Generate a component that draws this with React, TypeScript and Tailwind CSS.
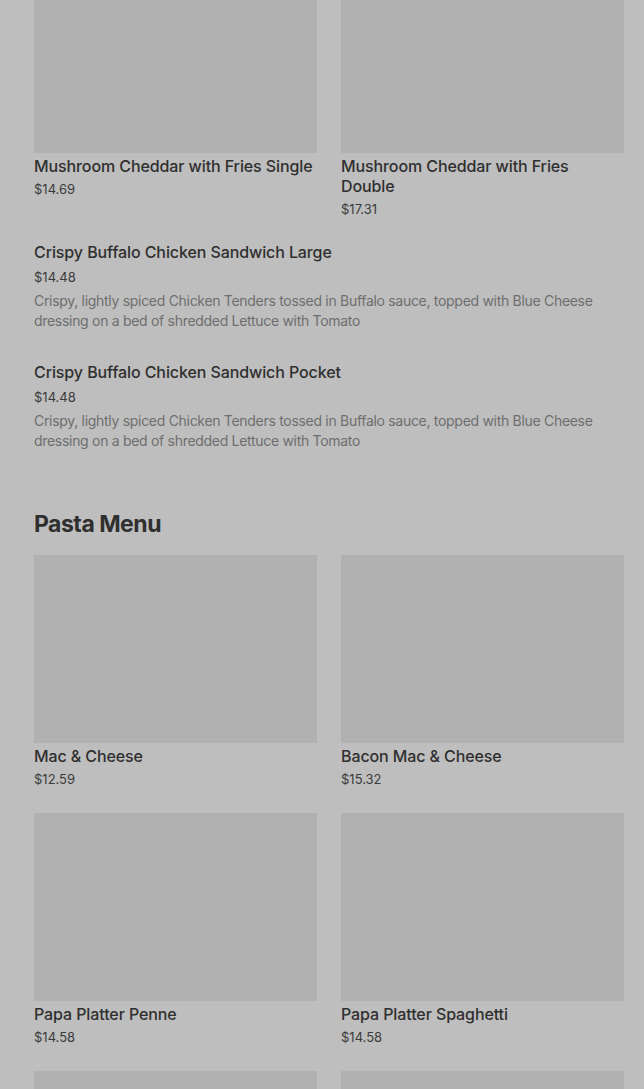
import React from 'react';

interface Item {
  name: string;
  price: string;
}

const pasta: Item[] = [
  { name: 'Mac & Cheese', price: '$12.59' },
  { name: 'Bacon Mac & Cheese', price: '$15.32' },
  { name: 'Papa Platter Penne', price: '$14.58' },
  { name: 'Papa Platter Spaghetti', price: '$14.58' },
];

const desc =
  'Crispy, lightly spiced Chicken Tenders tossed in Buffalo sauce, topped with Blue Cheese dressing on a bed of shredded Lettuce with Tomato';

const Card: React.FC<{ item: Item }> = ({ item }) => (
  <div className="flex flex-col">
    <div className="h-[188px] w-full bg-[#b1b1b1]" />
    <div className="mt-[3px] text-[16px] leading-5 font-medium tracking-[-0.1px] text-[#2f2f2f]">{item.name}</div>
    <div className="mt-[4px] text-[13px] leading-[18px] text-[#3b3b3b]">{item.price}</div>
  </div>
);

const ListItem: React.FC<{ name: string; price: string }> = ({ name, price }) => (
  <div className="flex flex-col pb-[31px]">
    <div className="text-[16px] leading-5 font-medium tracking-[-0.1px] text-[#2f2f2f]">{name}</div>
    <div className="mt-[6px] text-[13px] leading-[18px] text-[#3b3b3b]">{price}</div>
    <div className="mt-[5px] pr-[20px] text-[14px] leading-5 tracking-[-0.3px] text-[#6e6e6e]">{desc}</div>
  </div>
);

export default function App() {
  return (
    <div
      className="h-[1089px] overflow-hidden bg-[#bebebe] pl-[34px] pr-[20px]"
      style={{ fontFamily: 'Inter, "Noto Sans", sans-serif' }}
    >
      <div className="-mt-[35px] grid grid-cols-2 gap-x-[24px]">
        <Card item={{ name: 'Mushroom Cheddar with Fries Single', price: '$14.69' }} />
        <Card item={{ name: 'Mushroom Cheddar with Fries Double', price: '$17.31' }} />
      </div>

      <div className="mt-[24px] flex flex-col">
        <ListItem name="Crispy Buffalo Chicken Sandwich Large" price="$14.48" />
        <ListItem name="Crispy Buffalo Chicken Sandwich Pocket" price="$14.48" />
      </div>

      <h2 className="mt-[26px] text-[23px] leading-8 font-bold tracking-[-0.5px] text-[#2f2f2f]">Pasta Menu</h2>

      <div className="mt-[15px] grid grid-cols-2 gap-x-[24px] gap-y-[25px]">
        {pasta.map((p) => (
          <Card key={p.name} item={p} />
        ))}
        <div className="h-[188px] bg-[#b1b1b1]" />
        <div className="h-[188px] bg-[#b1b1b1]" />
      </div>
    </div>
  );
}
